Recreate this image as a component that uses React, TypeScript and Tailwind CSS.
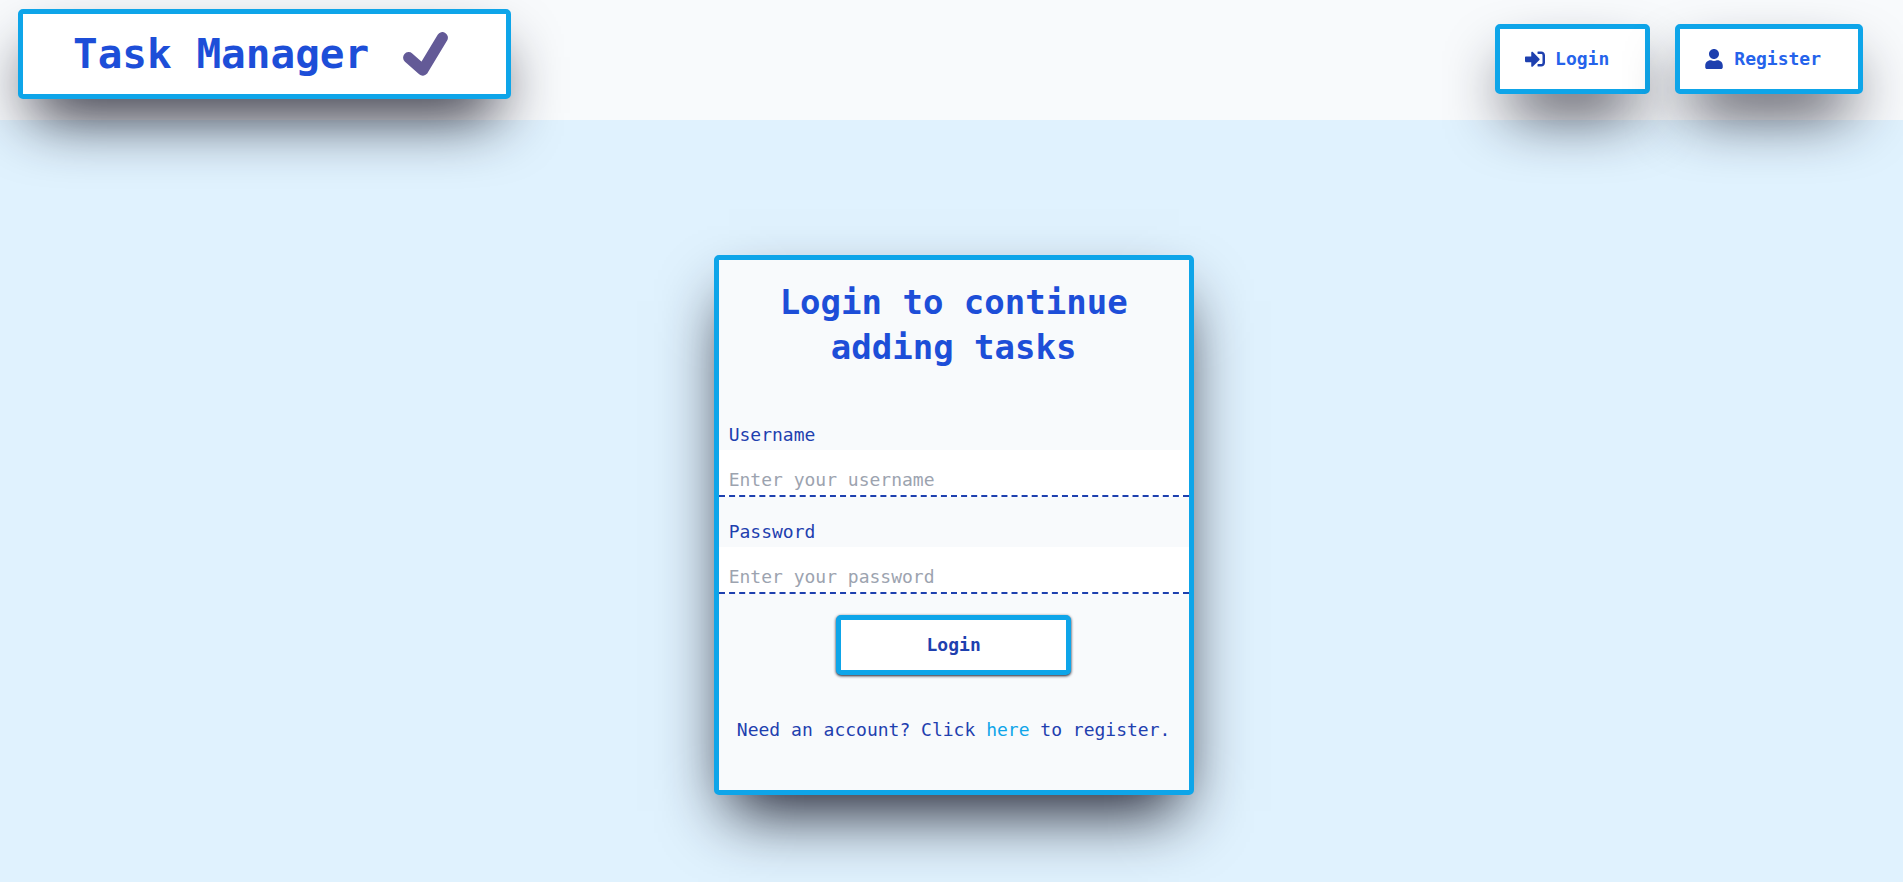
import { FaSignInAlt, FaUser } from "react-icons/fa";

const boxShadow = "shadow-[0_31px_62px_-15px_#181827]";
const frame = "rounded-[5px] border-5 border-[#0ea5e9]";

function CheckMark() {
  return (
    <svg width="45" height="44" viewBox="0 0 45 44" fill="none" aria-hidden="true">
      <path
        d="M5.6 25.6L19.8 38.2L39.4 5.6"
        stroke="#635a97"
        strokeWidth="11"
        strokeLinecap="round"
        strokeLinejoin="round"
      />
    </svg>
  );
}

function Header() {
  return (
    <header className="flex h-[120px] items-start justify-between bg-[#f8fafc] pl-[18px] pr-10">
      <a
        href="#home"
        className={`mt-[9px] flex h-[90px] items-center gap-[34px] bg-white pl-[50px] pr-[58px] ${frame} ${boxShadow}`}
      >
        <h1 className="text-[41px] leading-[50px] font-bold text-[#1d4ed8]">Task Manager</h1>
        <CheckMark />
      </a>
      <nav className="mt-6 flex gap-[25px]">
        <a
          href="#login"
          className={`flex h-[70px] items-center gap-2.5 bg-white pl-[25px] pr-9 font-bold text-[#2563eb] ${frame} ${boxShadow}`}
        >
          <FaSignInAlt className="size-5 text-[#1e40af]" />
          Login
        </a>
        <a
          href="#register"
          className={`flex h-[70px] items-center gap-[11px] bg-white pl-[25px] pr-[37px] font-bold text-[#2563eb] ${frame} ${boxShadow}`}
        >
          <FaUser className="h-5 w-[18px] text-[#1e40af]" />
          Register
        </a>
      </nav>
    </header>
  );
}

type FieldProps = { id: string; label: string; type: string; placeholder: string };

function Field({ id, label, type, placeholder }: FieldProps) {
  return (
    <div className="flex flex-col">
      <label htmlFor={id} className="px-2.5">
        {label}
      </label>
      <input
        id={id}
        type={type}
        placeholder={placeholder}
        className="h-[47px] w-full border-b-2 border-dashed border-[#1e40af] bg-white px-2.5 pt-[13px] leading-[30px] outline-none placeholder:text-[#9ca3af]"
      />
    </div>
  );
}

function LoginCard() {
  return (
    <section
      className={`mx-auto w-[480px] max-w-full bg-[#f8fafc] pt-5 pb-[45px] lg:ml-[37.5%] ${frame} ${boxShadow}`}
    >
      <h2 className="px-10 text-center text-[34px] leading-[45px] font-bold text-[#1d4ed8]">
        Login to continue adding tasks
      </h2>
      <form className="mt-[50px] flex flex-col gap-[21px]" onSubmit={(e) => e.preventDefault()}>
        <div className="flex flex-col gap-5">
          <Field id="username" label="Username" type="text" placeholder="Enter your username" />
          <Field id="password" label="Password" type="password" placeholder="Enter your password" />
        </div>
        <button
          type="submit"
          className={`h-[60px] w-1/2 self-center bg-white font-bold shadow-[0_1px_3px_#181827] ${frame}`}
        >
          Login
        </button>
      </form>
      <p className="mt-10 text-center">
        Need an account? Click{" "}
        <a href="#register" className="text-[#0ea5e9]">
          here
        </a>{" "}
        to register.
      </p>
    </section>
  );
}

export default function App() {
  return (
    <div className="min-h-screen bg-[#e0f2fe] font-['DejaVu_Sans_Mono',monospace] text-[18px] leading-[30px] text-[#1e40af]">
      <Header />
      <main className="pt-[135px]">
        <LoginCard />
      </main>
    </div>
  );
}
